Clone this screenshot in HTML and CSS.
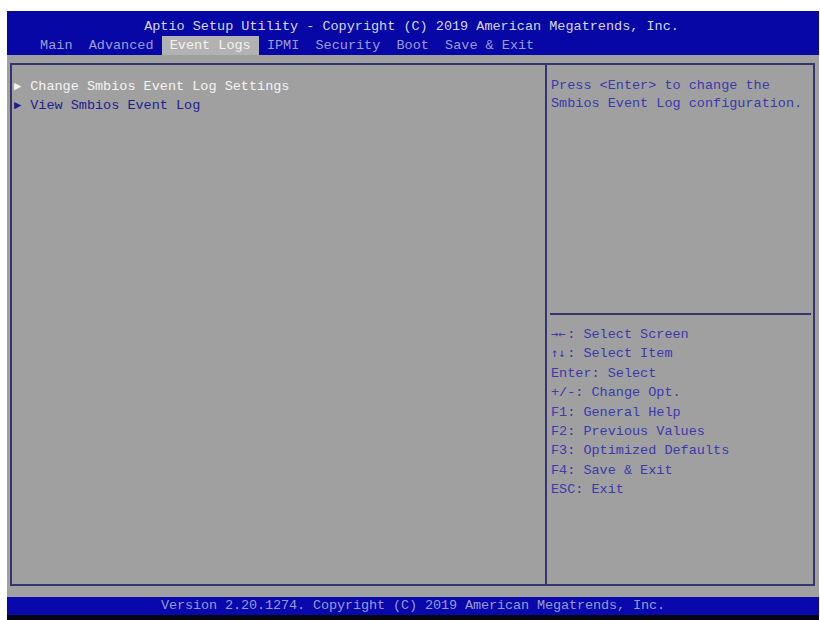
FILE: index.html
```html
<!DOCTYPE html>
<html>
<head>
<meta charset="utf-8">
<link rel="stylesheet" href="styles.css">
</head>
<body>
<div class="screen">
  <header class="top">
    <div class="title">Aptio Setup Utility - Copyright (C) 2019 American Megatrends, Inc.</div>
    <nav class="menu">
      <span class="tab">Main</span><span class="tab">Advanced</span><span class="tab active">Event Logs</span><span class="tab">IPMI</span><span class="tab">Security</span><span class="tab">Boot</span><span class="tab">Save &amp; Exit</span>
    </nav>
  </header>
  <main class="body">
    <div class="frame">
      <section class="left">
        <div class="item selected"><span class="arrow">&#9654;</span> Change Smbios Event Log Settings</div>
        <div class="item"><span class="arrow">&#9654;</span> View Smbios Event Log</div>
      </section>
      <aside class="right">
        <div class="help">
          <div class="line">Press &lt;Enter&gt; to change the</div>
          <div class="line">Smbios Event Log configuration.</div>
        </div>
        <div class="divider"></div>
        <div class="keys">
          <div class="line"><span class="sym">&rarr;&larr;</span>: Select Screen</div>
          <div class="line"><span class="sym">&uarr;&darr;</span>: Select Item</div>
          <div class="line">Enter: Select</div>
          <div class="line">+/-: Change Opt.</div>
          <div class="line">F1: General Help</div>
          <div class="line">F2: Previous Values</div>
          <div class="line">F3: Optimized Defaults</div>
          <div class="line">F4: Save &amp; Exit</div>
          <div class="line">ESC: Exit</div>
        </div>
      </aside>
    </div>
  </main>
  <footer class="foot">Version 2.20.1274. Copyright (C) 2019 American Megatrends, Inc.</footer>
  <div class="edge"></div>
</div>
</body>
</html>
```

FILE: styles.css
```css
html, body {
  margin: 0;
  padding: 0;
  background: #ffffff;
}
body {
  width: 820px;
  height: 620px;
  overflow: hidden;
  font-family: "Liberation Mono", "DejaVu Sans Mono", monospace;
  font-size: 13.5px;
}
.screen {
  margin: 11px 0 0 7px;
  width: 812px;
  height: 609px;
  display: flex;
  flex-direction: column;
  background: #a0a0a0;
}
.top {
  background: #0707a6;
  height: 44px;
  flex: none;
  box-sizing: border-box;
  padding-top: 6px;
}
.title {
  text-align: center;
  color: #d6d6e6;
  line-height: 19px;
  height: 19px;
  white-space: pre;
  padding-right: 3px;
}
.menu {
  display: flex;
  padding-left: 25px;
  line-height: 19px;
  height: 19px;
  white-space: nowrap;
}
.tab {
  color: #9d9dd4;
  padding: 0 8.1px;
}
.tab.active {
  background: #b2b2b2;
  color: #f2f2f2;
}
.body {
  flex: 1;
  min-height: 0;
  padding: 8px 4px 11px 3px;
  display: flex;
}
.frame {
  flex: 1;
  min-height: 0;
  border: 2px solid #35356e;
  display: grid;
  grid-template-columns: 535px 1fr;
  overflow: hidden;
}
.left {
  border-right: 2px solid #35356e;
  padding: 12px 0 0 2px;
}
.item {
  line-height: 18px;
  color: #1e1e92;
  white-space: pre;
}
.item.selected {
  color: #f4f4f4;
}
.arrow {
  display: inline-block;
  width: 8.1px;
  font-family: "DejaVu Sans", sans-serif;
  font-size: 9.5px;
  vertical-align: 1px;
}
.right {
  padding: 12px 3px 0 4px;
  display: flex;
  flex-direction: column;
  white-space: nowrap;
}
.line {
  white-space: pre;
}
.sym {
  display: inline-block;
  width: 16.2px;
  font-family: "DejaVu Sans Mono", monospace;
  font-size: 12px;
}
.help {
  color: #3a3aae;
  line-height: 18px;
  height: 236px;
}
.divider {
  border-top: 2px solid #35356e;
  margin: 0 -1px 0 -1px;
}
.keys {
  padding-top: 10px;
  color: #3a3aae;
  line-height: 19.4px;
}
.foot {
  background: #0808ac;
  color: #9a9ad0;
  height: 18px;
  flex: none;
  line-height: 18px;
  text-align: center;
  white-space: pre;
  letter-spacing: -0.1px;
}
.edge {
  background: #050510;
  height: 5px;
  flex: none;
}
```
